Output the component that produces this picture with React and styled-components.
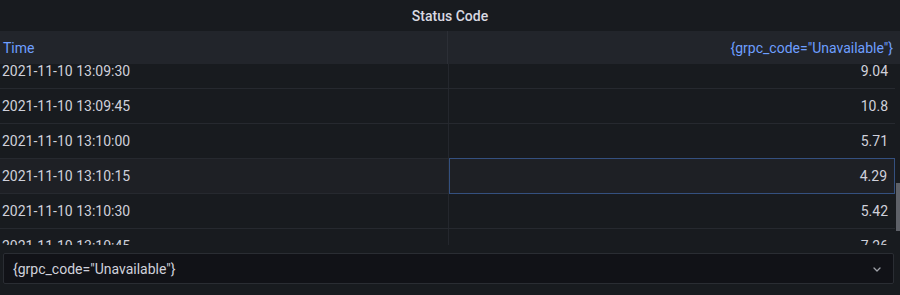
import React from "react";
import styled, { createGlobalStyle } from "styled-components";

const Global = createGlobalStyle`
  html, body { margin: 0; padding: 0; background: #181b1f; }
  body { font-family: Roboto, "Liberation Sans", sans-serif; }
`;

const Panel = styled.div`
  width: 900px;
  height: 295px;
  background: #181b1f;
  display: flex;
  flex-direction: column;
  overflow: hidden;
  color: #ccccdc;
  font-size: 14px;
`;

const Title = styled.div`
  height: 31px;
  display: flex;
  align-items: center;
  justify-content: center;
  font-weight: 500;
  font-size: 14px;
  color: #d8d9e2;
`;

const HeaderRow = styled.div`
  height: 33px;
  display: grid;
  grid-template-columns: 448px 1fr;
  background: #22252b;
`;

const HeaderCell = styled.div`
  display: flex;
  align-items: center;
  justify-content: ${(p) => (p.$right ? "flex-end" : "flex-start")};
  padding: ${(p) => (p.$right ? "0 7px 0 0" : "0 0 0 3px")};
  color: #6e9fff;
  border-right: ${(p) => (p.$right ? "none" : "1px solid #2c2f36")};
`;

const Body = styled.div`
  position: relative;
  height: 181px;
  overflow: hidden;
`;

const Rows = styled.div`
  margin-top: -10px;
  margin-right: 5px;
`;

const Row = styled.div`
  height: 35px;
  display: grid;
  grid-template-columns: 449px 1fr;
  border-bottom: 1px solid #26292f;
  box-sizing: border-box;
  background: ${(p) => (p.$hover ? "#1e2025" : "transparent")};
`;

const Cell = styled.div`
  display: flex;
  align-items: center;
  justify-content: ${(p) => (p.$right ? "flex-end" : "flex-start")};
  padding: ${(p) => (p.$right ? "0 7px 0 0" : "0 0 0 2px")};
  border-right: ${(p) => (p.$right ? "none" : "1px solid #24272d")};
  border: ${(p) => (p.$active ? "1px solid #34507f" : undefined)};
  margin-top: ${(p) => (p.$active ? "-1px" : "0")};
  margin-bottom: ${(p) => (p.$active ? "-1px" : "0")};
  color: #d0d1db;
`;

const Scrollbar = styled.div`
  position: absolute;
  right: 0;
  top: 119px;
  width: 4px;
  height: 48px;
  background: #5e6168;
`;

const SelectWrap = styled.div`
  padding: 8px 6px 0 3px;
`;

const Select = styled.div`
  height: 31px;
  box-sizing: border-box;
  background: #111217;
  border: 1px solid #2a2d33;
  border-radius: 2px;
  display: flex;
  align-items: center;
  justify-content: space-between;
  padding: 0 11px 0 9px;
  color: #d0d1db;
`;

const Chevron = styled.svg`
  width: 10px;
  height: 10px;
  color: #9fa1a8;
`;

const data = [
  ["2021-11-10 13:09:30", "9.04"],
  ["2021-11-10 13:09:45", "10.8"],
  ["2021-11-10 13:10:00", "5.71"],
  ["2021-11-10 13:10:15", "4.29"],
  ["2021-11-10 13:10:30", "5.42"],
  ["2021-11-10 13:10:45", "7.26"],
];

export default function App() {
  return (
    <>
      <Global />
      <Panel>
        <Title>Status Code</Title>
        <HeaderRow>
          <HeaderCell>Time</HeaderCell>
          <HeaderCell $right>{'{grpc_code="Unavailable"}'}</HeaderCell>
        </HeaderRow>
        <Body>
          <Rows>
            {data.map(([t, v], i) => (
              <Row key={t} $hover={i === 3}>
                <Cell>{t}</Cell>
                <Cell $right $active={i === 3}>{v}</Cell>
              </Row>
            ))}
          </Rows>
          <Scrollbar />
        </Body>
        <SelectWrap>
          <Select>
            <span>{'{grpc_code="Unavailable"}'}</span>
            <Chevron viewBox="0 0 10 10" fill="none">
              <path d="M2 4 L5 7 L8 4" stroke="currentColor" strokeWidth="1.3" strokeLinecap="round" strokeLinejoin="round" />
            </Chevron>
          </Select>
        </SelectWrap>
      </Panel>
    </>
  );
}
